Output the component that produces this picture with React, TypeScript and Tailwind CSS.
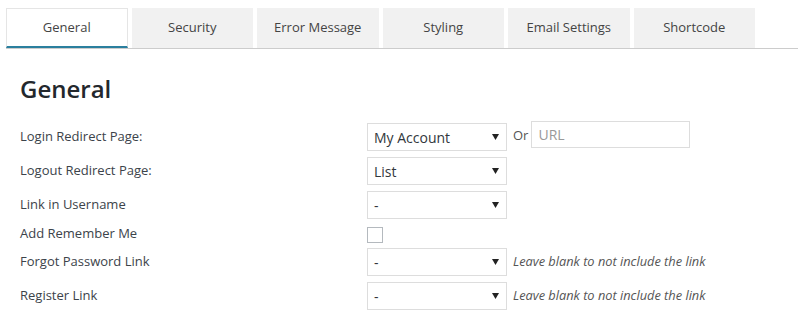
const tabs = ["General", "Security", "Error Message", "Styling", "Email Settings", "Shortcode"];

function Select({ value }: { value: string }) {
  return (
    <div className="flex h-[28px] w-[140px] items-center justify-between border border-[#dddddd] bg-white pl-[6px] pr-[7px] text-[14px] text-[#32373c]">
      <span>{value}</span>
      <svg width="7" height="6" viewBox="0 0 7 6">
        <path d="M0 0 H7 L3.5 6 Z" fill="#222" />
      </svg>
    </div>
  );
}

function Row({ label, h, children }: { label: string; h: string; children: React.ReactNode }) {
  return (
    <div className={`flex items-center ${h}`}>
      <div className="w-[347px] text-[13px] text-[#3c434a]">{label}</div>
      <div className="flex items-center">{children}</div>
    </div>
  );
}

function Hint() {
  return <span className="ml-[6px] text-[12.8px] italic text-[#555]">Leave blank to not include the link</span>;
}

export default function App() {
  return (
    <div className="h-[327px] w-[803px] bg-white pl-[6px] pt-[8px]" style={{ fontFamily: '"Open Sans", "Noto Sans", sans-serif' }}>
      <div className="flex w-[792px] gap-[4px] border-b border-[#cccccc]">
        {tabs.map((t, i) => (
          <div
            key={t}
            className={
              i === 0
                ? "flex h-[40px] w-[121.5px] items-center justify-center border-x border-t border-[#e5e5e5] border-b-2 border-b-[#2a7f9e] bg-white text-[13px] text-[#444]"
                : "flex h-[40px] w-[121.5px] items-center justify-center bg-[#f1f1f1] text-[13px] text-[#444]"
            }
          >
            {t}
          </div>
        ))}
      </div>
      <div className="pl-[14px]">
        <h2 className="mt-[25px] h-[46px] text-[24px] font-semibold leading-[30px] text-[#23282d]">General</h2>
        <Row label="Login Redirect Page:" h="h-[34px]">
          <Select value="My Account" />
          <span className="mb-[3px] ml-[6px] text-[13px] text-[#555]">Or</span>
          <div className="mb-[5px] ml-[3px] flex h-[27px] w-[159px] items-center border border-[#dddddd] pl-[6px] text-[14px] text-[#999]">URL</div>
        </Row>
        <Row label="Logout Redirect Page:" h="h-[34px]">
          <Select value="List" />
        </Row>
        <Row label="Link in Username" h="h-[34px]">
          <Select value="-" />
        </Row>
        <Row label="Add Remember Me" h="h-[23px]">
          <div className="mt-[3px] h-[16px] w-[16px] border border-[#b4b9be] bg-white" />
        </Row>
        <Row label="Forgot Password Link" h="h-[34px]">
          <Select value="-" />
          <Hint />
        </Row>
        <Row label="Register Link" h="h-[34px]">
          <Select value="-" />
          <Hint />
        </Row>
      </div>
    </div>
  );
}
